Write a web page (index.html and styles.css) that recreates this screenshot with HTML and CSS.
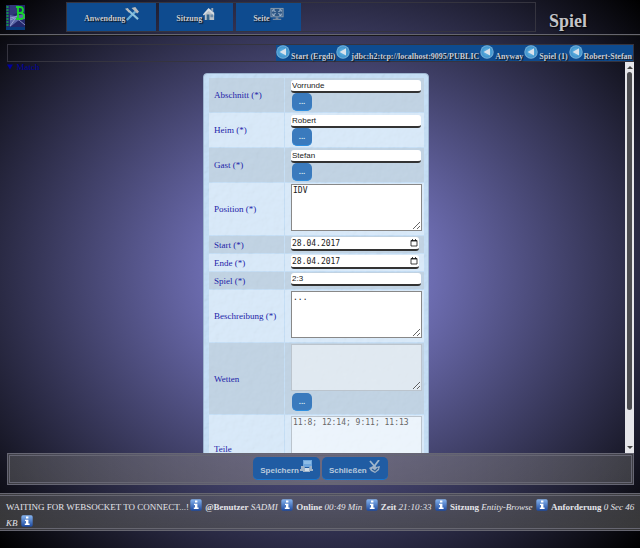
FILE: index.html
```html
<!DOCTYPE html>
<html lang="de">
<head>
<meta charset="utf-8">
<title>Spiel</title>
<link rel="stylesheet" href="styles.css">
</head>
<body>
<svg class="defs" width="0" height="0" aria-hidden="true">
  <defs>
    <linearGradient id="blue" x1="0" y1="0" x2="0" y2="1"><stop offset="0" stop-color="#86b4ef"/><stop offset="1" stop-color="#1d4aa0"/></linearGradient>
    <radialGradient id="sky"><stop offset="0" stop-color="#6bbbe8"/><stop offset=".75" stop-color="#4397cf"/><stop offset="1" stop-color="#7fb4d9"/></radialGradient>
    <symbol id="info" viewBox="0 0 12 12"><rect x=".3" y=".3" width="11.4" height="11.4" rx="1.6" fill="url(#blue)"/><path d="M5 1.6h2.4v1.9H5zM4 4.8h3.4v3.8h1.2v1.3H3.8V8.600H5V6H4z" fill="#fff"/></symbol>
    <symbol id="back" viewBox="0 0 14 14"><circle cx="7" cy="7" r="6.700" fill="url(#sky)"/><path d="M10 3.300v7.200L3.600 7z" fill="#d9e2ec"/></symbol>
  </defs>
</svg>
<header class="top">
  <svg class="logo" viewBox="0 0 19 25" aria-hidden="true">
    <rect width="19" height="25" fill="#23276a"/><path d="M4 0h9v7l-9 4z" fill="#31387a"/><path d="M4 10l5 1 10-2v5l-6 1-9 7z" fill="#5d68a8"/><path d="M4 15l5-2 4 2 6 5M4 13l5-1 4-2M9 14l-5 7" stroke="#a2abd8" stroke-width=".8" fill="none"/><path d="M0 22h19v3H0z" fill="#083b7c"/><path d="M1.500 1v21" stroke="#169448" stroke-width="2" stroke-dasharray="2 1"/><path d="M10 2h4q3 0 3 3t-3 3q4 0 4 3t-4 3h-4M12 2v12M11 8h3" stroke="#18d52b" stroke-width="1.800" fill="none"/>
  </svg>
  <nav class="menu">
    <a href="#app">Anwendung<svg viewBox="0 0 15 15"><path d="M2 14l9-9" stroke="#6aaed6" stroke-width="2.400"/><path d="M4 4l10 9" stroke="#8fc2dc" stroke-width="2.200"/><path d="M0 2l3-1 3 4-2 1zM7 1l4-1 4 5-2 2-3-3z" fill="#b9bcbe"/></svg></a>
    <a href="#session">Sitzung<svg viewBox="0 0 15 15"><path d="M3 6l5-4 5 4v8H3z" fill="#b9c1c9"/><path d="M1 8l6-7 6 6v2L7 4 2 9z" fill="#d8dde2"/><path d="M10 1h2v4l-2-2z" fill="#9aa8b8"/><path d="M5 8h3v6H5z" fill="#36658c"/><path d="M9 8h3v3H9z" fill="#6d8caa"/></svg></a>
    <a href="#page">Seite<svg viewBox="0 0 15 15"><rect x="1" y="1.500" width="13" height="9" fill="#2c5685" stroke="#8c9cac"/><path d="M3 5V3h2M10 3h2v2M12 7v2h-2M5 9H3V7M4 4l2 1M11 4L9 5M4 8l2-1M11 8L9 7" stroke="#b9cadb" fill="none"/><path d="M6 11h3v1.500h3V14H3v-1.500h3z" fill="#7589a0"/></svg></a>
  </nav>
  <h1>Spiel</h1>
</header>
<main>
  <nav class="crumbs">
    <a href="#c1"><svg><use href="#back"/></svg>Start (Ergdi)</a><a href="#c2"><svg><use href="#back"/></svg>jdbc:h2:tcp://localhost:9095/PUBLIC</a><a href="#c3"><svg><use href="#back"/></svg>Anyway</a><a href="#c4"><svg><use href="#back"/></svg>Spiel (1)</a><a href="#c5"><svg><use href="#back"/></svg>Robert-Stefan</a>
  </nav>
  <div class="view">
    <details class="content" open>
      <summary>Match</summary>
      <form id="match" class="panel">
        <table>
          <tr class="pick"><th><label for="f1">Abschnitt (*)</label></th><td><input id="f1" value="Vorrunde"><button type="button">...</button></td></tr>
          <tr class="pick"><th><label for="f2">Heim (*)</label></th><td><input id="f2" value="Robert"><button type="button">...</button></td></tr>
          <tr class="pick"><th><label for="f3">Gast (*)</label></th><td><input id="f3" value="Stefan"><button type="button">...</button></td></tr>
          <tr class="long"><th><label for="f4">Position (*)</label></th><td><textarea id="f4">IDV</textarea></td></tr>
          <tr><th><label for="f5">Start (*)</label></th><td><div class="date"><input id="f5" value="28.04.2017"><svg viewBox="0 0 8 8"><path d="M1 1.500h6v5.500H1zM1 2h6M2.500 0v2M5.500 0v2" stroke="#111" stroke-width=".8" fill="none"/></svg></div></td></tr>
          <tr><th><label for="f6">Ende (*)</label></th><td><div class="date"><input id="f6" value="28.04.2017"><svg viewBox="0 0 8 8"><path d="M1 1.500h6v5.500H1zM1 2h6M2.500 0v2M5.500 0v2" stroke="#111" stroke-width=".8" fill="none"/></svg></div></td></tr>
          <tr><th><label for="f7">Spiel (*)</label></th><td><input id="f7" value="2:3"></td></tr>
          <tr class="long"><th><label for="f8">Beschreibung (*)</label></th><td><textarea id="f8">...</textarea></td></tr>
          <tr class="bets"><th><label for="f9">Wetten</label></th><td><textarea id="f9" disabled></textarea><button type="button">...</button></td></tr>
          <tr class="parts"><th><label for="f10">Teile</label></th><td><textarea id="f10" disabled>11:8; 12:14; 9:11; 11:13</textarea></td></tr>
        </table>
      </form>
    </details>
    <div class="scrollbar" aria-hidden="true"><i class="up"></i><div class="track"><b></b></div><i class="down"></i></div>
  </div>
  <div class="actions">
    <button form="match" type="button">Speichern<svg viewBox="0 0 13 13"><path d="M3 0h9v7H3z" fill="#6fa6dc"/><path d="M4 1h7v3H4z" fill="#8dbce6"/><path d="M1 6h3l1 2h4l1-2h2v3h1v2h-3v1H3v-1H0V9h1z" fill="#9fb3c8"/><path d="M5 8h4v3H5z" fill="#cfdce8"/></svg></button>
    <button type="button">Schließen<svg viewBox="0 0 13 13"><path d="M2 1l6 7M11 0L5 8" stroke="#9fb7cc" stroke-width="1.800"/><path d="M1 8l4-2 3 1 4-1-1 4-4 3-4-2z" fill="#9fb3c8"/><path d="M4 9l3 2 3-3" stroke="#2c5f96" stroke-width="1.200" fill="none"/></svg></button>
  </div>
</main>
<footer class="status">WAITING FOR WEBSOCKET TO CONNECT...!<svg><use href="#info"/></svg> <b>@Benutzer</b> <i>SADMI</i> <svg><use href="#info"/></svg> <b>Online</b> <i>00:49 Min</i> <svg><use href="#info"/></svg> <b>Zeit</b> <i>21:10:33</i> <svg><use href="#info"/></svg> <b>Sitzung</b> <i>Entity-Browse</i> <svg><use href="#info"/></svg> <b>Anforderung</b> <i>0 Sec 46 KB</i> <svg><use href="#info"/></svg></footer>
</body>
</html>
```
FILE: styles.css
```css
* { box-sizing: border-box; }
body {
  margin: 0;
  height: 100vh;
  display: flex;
  flex-direction: column;
  padding-bottom: 17px;
  background: radial-gradient(#9090ea, #000);
  font-family: "Liberation Serif", serif;
  font-size: 9px;
  overflow: hidden;
}
.defs { position: absolute; }
a { color: inherit; text-decoration: none; }

.top {
  display: flex;
  align-items: flex-start;
  height: 36px;
  padding: 2px 6px 0;
  border-bottom: 2px ridge #66666e;
}
.logo { width: 19px; height: 25px; margin: 3px 41px 0 0; }
.menu {
  flex: 0 1 470px;
  display: flex;
  gap: 3px;
  height: 30px;
  border: 1px solid #35343f;
  color: #c8cbd2;
  font-size: 8px;
  font-weight: bold;
  text-shadow: 1px 1px 1px #111;
}
.menu a {
  display: flex;
  align-items: center;
  padding: 2px 17px 0;
  background: #0e4b8f;
}
.menu svg { width: 14px; height: 14px; margin-bottom: 8px; }
h1 {
  margin: 8px 0 0 13px;
  color: #c4c4c8;
  font-size: 18px;
  line-height: 22px;
  text-shadow: 1px 1px 2px #000;
}

main {
  flex: 1;
  min-height: 0;
  display: flex;
  flex-direction: column;
  padding: 8px 6px 8px 7px;
}
.crumbs {
  display: flex;
  justify-content: flex-end;
  height: 18px;
  border: 1px solid #35343f;
  color: #c8ccd6;
  font-size: 8px;
  font-weight: bold;
  text-shadow: 1px 1px 1px #111;
  white-space: nowrap;
}
.crumbs a { display: flex; align-items: flex-end; gap: 1px; padding-right: 1px; line-height: 9px; background: #0e4b8f; }
.crumbs svg { width: 14px; height: 14px; margin-bottom: 2px; }

.view { flex: 1; min-height: 0; display: flex; }
.content { flex: 1; overflow: hidden; color: #00008b; }
summary { height: 11px; line-height: 11px; color: #0000a0; }
.panel {
  width: 226px;
  margin: 0 auto;
  padding: 3px 3px 4px 4px;
  border: 1px solid #9db4cf;
  border-radius: 4px;
  background-color: #c3dcf3;
  background-image: url("data:image/svg+xml,%3Csvg xmlns='http://www.w3.org/2000/svg' width='128' height='128'%3E%3Cfilter id='n' x='0' y='0' width='1' height='1'%3E%3CfeTurbulence type='fractalNoise' baseFrequency='.15' numOctaves='3' stitchTiles='stitch'/%3E%3CfeDiffuseLighting lighting-color='%23c8e1f8' surfaceScale='.6'%3E%3CfeDistantLight azimuth='225' elevation='75'/%3E%3C/feDiffuseLighting%3E%3C/filter%3E%3Crect width='128' height='128' filter='url(%23n)'/%3E%3C/svg%3E");
}
table { width: 100%; border-spacing: 1px; }
tr { height: 17px; background: rgba(235, 243, 252, .5); }
tr:nth-child(odd) { background: rgba(190, 203, 215, .6); }
tr.pick { height: 34px; }
tr.long { height: 52px; }
tr.bets { height: 71px; }
tr.parts { height: 68px; }
th { width: 77px; padding: 0 0 0 5px; font-weight: normal; text-align: left; color: #2323a8; white-space: nowrap; }
td { padding: 1px 2px 1px 6px; vertical-align: top; }
.pick td { padding-top: 2px; }
input, textarea, button { display: block; margin: 0; font-size: 8px; }
input {
  width: 130px;
  height: 13px;
  padding: 0 1px;
  border: 0;
  border-bottom: 2px solid #333;
  border-radius: 3px;
  background: #fff;
  color: #222;
  font-family: "Liberation Sans", sans-serif;
}
.date {
  display: flex;
  align-items: center;
  width: 128px;
  height: 14px;
  padding-right: 1px;
  border-bottom: 2px solid #333;
  border-radius: 3px;
  background: #fff;
}
.date input { flex: 1; min-width: 0; height: 12px; border: 0; font-family: "DejaVu Sans Mono", monospace; }
.date svg { width: 8px; height: 8px; }
textarea {
  width: 131px;
  height: 47px;
  padding: 1px;
  border: 1px solid #888;
  background: #fff;
  color: #222;
  font-family: "DejaVu Sans Mono", monospace;
}
textarea:disabled { background: rgba(255, 255, 255, .5); border-color: #bbc4cd; color: #666; }
td button {
  width: 20px;
  height: 18px;
  margin-left: 1px;
  padding: 0;
  border: 0;
  border-bottom: 1px solid #2f8fe0;
  border-radius: 5px;
  background: #3a7abd;
  color: #d8e4f0;
  font-family: "Liberation Sans", sans-serif;
  font-weight: bold;
}
.bets button { margin-top: 2px; }
.parts textarea { height: 64px; }

.scrollbar { width: 9px; display: flex; flex-direction: column; align-items: center; padding: 4px 0; background: #e6e6ea; }
.scrollbar i { border: 3px solid transparent; }
.scrollbar .up { border-top: 0; border-bottom-color: #444; }
.scrollbar .down { border-bottom: 0; border-top-color: #444; }
.track { flex: 1; width: 5px; padding: 3px 0; }
.track b { display: block; height: 91%; border-radius: 3px; background: #4c4c50; }

.actions {
  display: flex;
  justify-content: center;
  align-items: center;
  gap: 2px;
  height: 32px;
  padding-bottom: 1px;
  border: 3px double #666673;
  background: linear-gradient(90deg, rgba(110, 110, 110, .45), rgba(130, 125, 130, .6) 50%, rgba(110, 110, 110, .45));
}
.actions button {
  display: flex;
  align-items: flex-end;
  gap: 1px;
  height: 23px;
  padding: 0 7px 4px;
  border: 0;
  border-bottom: 1px solid #1878d0;
  border-radius: 5px;
  background: #205ca3;
  color: #bacbdd;
  font-family: "Liberation Sans", sans-serif;
  font-weight: bold;
}
.actions svg { width: 13px; height: 13px; margin-bottom: 2px; }

.status {
  height: 38px;
  padding: 3px 4px 0 6px;
  border: 3px double #666670;
  border-width: 3px 0;
  background: linear-gradient(rgba(110, 110, 110, .45), rgba(90, 90, 90, .6));
  color: #e4e4ea;
  line-height: 15px;
}
.status svg { width: 12px; height: 12px; margin: 0 1px; vertical-align: -1px; }
```
